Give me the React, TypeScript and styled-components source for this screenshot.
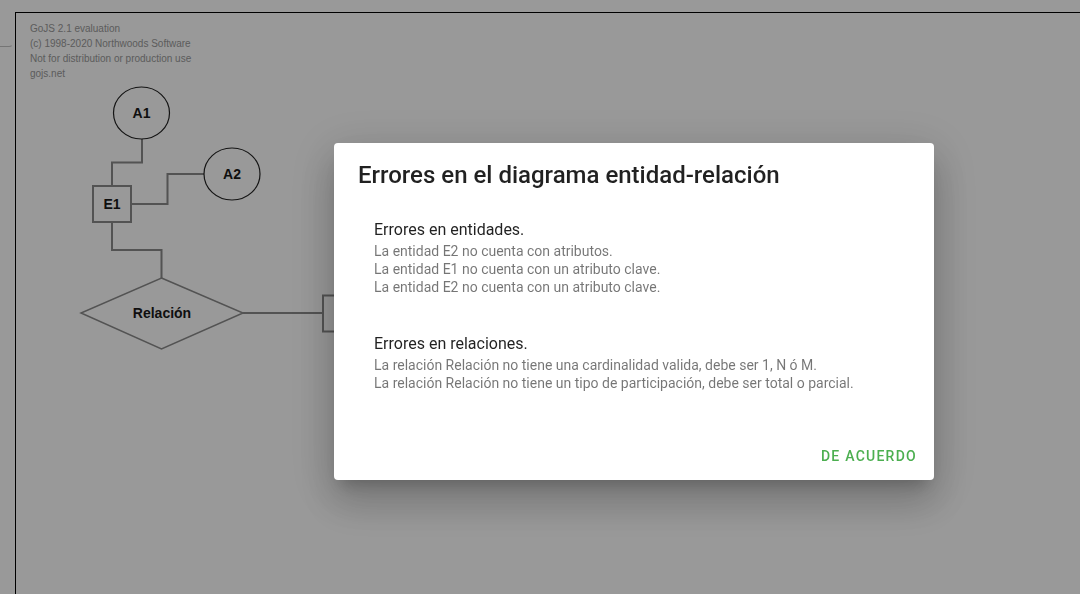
import React from "react";
import styled, { createGlobalStyle } from "styled-components";

const Global = createGlobalStyle`
  html, body { margin: 0; padding: 0; background: #ffffff; overflow: hidden; }
  #root { width: 1080px; height: 594px; overflow: hidden; }
`;

const Page = styled.div`
  display: flex;
  align-items: flex-start;
  width: 1080px;
  height: 594px;
  overflow: hidden;
  background: #ffffff;
`;

const Side = styled.div`
  flex: none;
  width: 15px;
`;

const PanelStub = styled.div`
  width: 12px;
  height: 46px;
  border-bottom: 1px solid #c4c4c4;
  border-right: 1px solid #c4c4c4;
  border-bottom-right-radius: 4px;
  border-right-color: transparent;
`;

const Canvas = styled.div`
  position: relative;
  flex: none;
  margin-top: 12px;
  width: 1200px;
  height: 700px;
  border-top: 1px solid #000;
  border-left: 1px solid #000;
  background: #ffffff;
`;

const Watermark = styled.div`
  padding: 8px 0 0 14px;
  font-family: "Liberation Sans", Arial, sans-serif;
  font-size: 10px;
  line-height: 15px;
  color: #9a9a9a;
`;

const DiagramSvg = styled.svg`
  position: absolute;
  left: 0;
  top: 0;
`;

const Backdrop = styled.div`
  position: fixed;
  inset: 0;
  background: rgba(0, 0, 0, 0.4);
`;

const Dialog = styled.div`
  position: fixed;
  left: 334px;
  top: 143px;
  width: 600px;
  height: 337px;
  display: flex;
  flex-direction: column;
  background: #fff;
  border-radius: 4px;
  box-shadow: 0px 11px 15px -7px rgba(0, 0, 0, 0.2),
    0px 24px 38px 3px rgba(0, 0, 0, 0.14), 0px 9px 46px 8px rgba(0, 0, 0, 0.12);
  font-family: Roboto, "Noto Sans", sans-serif;
`;

const Title = styled.h2`
  margin: 0;
  padding: 16px 24px;
  font-size: 24px;
  font-weight: 500;
  line-height: 32px;
  color: rgba(0, 0, 0, 0.87);
`;

const Content = styled.div`
  flex: 1;
  display: flex;
  flex-direction: column;
  gap: 36px;
  padding: 11px 24px 0 40px;
`;

const Section = styled.div`
  display: flex;
  flex-direction: column;
`;

const SectionHeading = styled.div`
  font-size: 16px;
  line-height: 24px;
  color: rgba(0, 0, 0, 0.87);
`;

const SectionLine = styled.div`
  font-size: 14px;
  line-height: 18px;
  color: rgba(0, 0, 0, 0.54);
`;

const Actions = styled.div`
  display: flex;
  justify-content: flex-end;
  padding: 8px 8px 6px;
`;

const TextButton = styled.button`
  height: 36px;
  padding: 6px 9px;
  border: none;
  background: transparent;
  border-radius: 4px;
  font-family: Roboto, "Noto Sans", sans-serif;
  font-size: 14px;
  font-weight: 500;
  letter-spacing: 0.09em;
  text-transform: uppercase;
  color: #4caf50;
  cursor: pointer;
`;

const LINK = "#8a8a8a";

const sections = [
  {
    heading: "Errores en entidades.",
    lines: [
      "La entidad E2 no cuenta con atributos.",
      "La entidad E1 no cuenta con un atributo clave.",
      "La entidad E2 no cuenta con un atributo clave.",
    ],
  },
  {
    heading: "Errores en relaciones.",
    lines: [
      "La relación Relación no tiene una cardinalidad valida, debe ser 1, N ó M.",
      "La relación Relación no tiene un tipo de participación, debe ser total o parcial.",
    ],
  },
];

function Diagram() {
  const label = {
    fontFamily: '"Liberation Sans", Arial, sans-serif',
    fontWeight: 700,
    fontSize: 14,
    fill: "#1a1a1a",
    textAnchor: "middle" as const,
    dominantBaseline: "central" as const,
  };
  return (
    <DiagramSvg width={1200} height={700} viewBox="16 13 1200 700">
      <g fill="none" stroke={LINK} strokeWidth={2}>
        <polyline points="142,139 142,162.5 112,162.5 112,186" />
        <polyline points="131,204 167.5,204 167.5,174 204,174" />
        <polyline points="112,222 112,250 161.5,250 161.5,278" />
        <line x1={243} y1={313} x2={323} y2={313} />
        <rect x={93} y={186} width={38} height={36} />
        <polygon points="161.5,278 243,313 161.5,349 81,313" strokeWidth={1.5} />
        <rect x={323} y={295.5} width={40} height={36} />
      </g>
      <g fill="#fff" stroke="#222" strokeWidth={1.2}>
        <ellipse cx={141.5} cy={113} rx={28} ry={26} />
        <ellipse cx={232} cy={174} rx={28} ry={26} />
      </g>
      <text x={141.5} y={113} {...label}>A1</text>
      <text x={232} y={174} {...label}>A2</text>
      <text x={112} y={204} {...label}>E1</text>
      <text x={162} y={313} {...label}>Relación</text>
    </DiagramSvg>
  );
}

export default function App() {
  return (
    <>
      <Global />
      <Page>
        <Side>
          <PanelStub />
        </Side>
        <Canvas>
          <Diagram />
          <Watermark>
            <div>GoJS 2.1 evaluation</div>
            <div>(c) 1998-2020 Northwoods Software</div>
            <div>Not for distribution or production use</div>
            <div>gojs.net</div>
          </Watermark>
        </Canvas>
      </Page>
      <Backdrop />
      <Dialog role="dialog">
        <Title>Errores en el diagrama entidad-relación</Title>
        <Content>
          {sections.map((s) => (
            <Section key={s.heading}>
              <SectionHeading>{s.heading}</SectionHeading>
              {s.lines.map((l) => (
                <SectionLine key={l}>{l}</SectionLine>
              ))}
            </Section>
          ))}
        </Content>
        <Actions>
          <TextButton>De acuerdo</TextButton>
        </Actions>
      </Dialog>
    </>
  );
}
